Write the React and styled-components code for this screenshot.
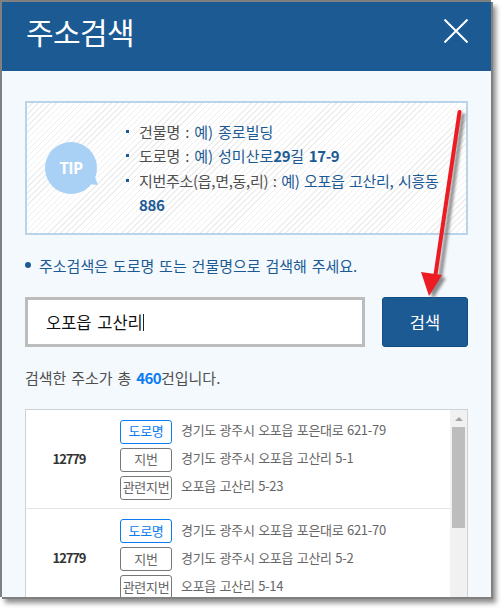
import React from "react";
import styled, { createGlobalStyle } from "styled-components";

const Global = createGlobalStyle`
  html, body { margin: 0; padding: 0; background: #fff; }
  body { font-family: "Noto Sans CJK KR", "Noto Sans", sans-serif; overflow: hidden; }
`;
const Page = styled.div`
  position: relative;
  width: 502px;
  height: 608px;
  overflow: hidden;
`;
const Win = styled.div`
  width: 489px;
  height: 595px;
  border-top: 2px solid #808080;
  border-left: 2px solid #808080;
  background: #f4f9fe;
  overflow: hidden;
  box-shadow: 2px 2px 0 #808080, 5px 6px 5px rgba(0,0,0,.45);
`;
const Header = styled.header`
  box-sizing: border-box;
  height: 69px;
  background: #1c5a94;
  display: flex;
  align-items: center;
  justify-content: space-between;
  padding: 0 23px 12px 24px;
`;
const Title = styled.h1`
  margin: 0;
  color: #fff;
  font-size: 30px;
  font-weight: 400;
  letter-spacing: -0.6px;
  line-height: 40px;
`;
const CloseIcon = styled.svg`
  width: 24px;
  height: 24px;
  display: block;
`;
const Body = styled.main`
  padding: 30px 23px 0;
`;
const Tip = styled.section`
  box-sizing: border-box;
  height: 134px;
  border: 2px solid #b8d3ea;
  background: repeating-linear-gradient(135deg, #fff 0 3.3px, #eeeeee 3.3px 4.3px);
  display: flex;
  align-items: center;
  padding: 0 20px 0 18px;
`;
const Bubble = styled.div`
  position: relative;
  flex: none;
  width: 52px;
  height: 52px;
  border-radius: 50%;
  background: #a9d1f5;
  color: #fff;
  font-family: "Open Sans", sans-serif;
  font-weight: 700;
  font-size: 16px;
  letter-spacing: -0.6px;
  display: flex;
  align-items: center;
  justify-content: center;
  margin-right: 29px;
  &::after {
    content: "";
    position: absolute;
    left: 43px;
    top: 35px;
    width: 10px;
    height: 8px;
    background: #a9d1f5;
    clip-path: polygon(70% 0, 100% 100%, 0 88%);
  }
`;
const TipList = styled.ul`
  list-style: none;
  margin: 1px 0 0;
  padding: 0;
  flex: 1;
  min-width: 0;
`;
const TipItem = styled.li`
  position: relative;
  padding-left: 13px;
  font-size: 15px;
  line-height: 24.4px;
  word-spacing: 1.5px;
  letter-spacing: ${p => (p.$tight ? "-0.3px" : "0")};
  color: #4f4f4f;
  &::before {
    content: "";
    position: absolute;
    left: 0;
    top: 10px;
    width: 3px;
    height: 3px;
    background: #1c5a94;
  }
`;
const Blue = styled.span`
  color: #1c5a94;
`;
const BoldBlue = styled.b`
  color: #1c5a94;
  font-weight: 700;
  letter-spacing: -0.4px;
`;
const Note = styled.p`
  margin: 18px 0 0;
  height: 24px;
  display: flex;
  align-items: center;
  gap: 8px;
  color: #1c5a94;
  font-size: 15px;
  word-spacing: 1.5px;
  &::before {
    content: "";
    width: 6px;
    height: 6px;
    border-radius: 50%;
    background: #1c5a94;
  }
`;
const SearchRow = styled.form`
  margin-top: 20px;
  display: flex;
  justify-content: space-between;
`;
const SearchInput = styled.div`
  box-sizing: border-box;
  width: 340px;
  height: 50px;
  border: 3px solid #bcbcbc;
  background: #fff;
  display: flex;
  align-items: center;
  padding-left: 18px;
  font-size: 16.5px;
  color: #111;
  word-spacing: 2px;
  &::after {
    content: "";
    width: 1px;
    height: 17px;
    background: #222;
  }
`;
const SearchButton = styled.button`
  box-sizing: border-box;
  width: 86px;
  height: 50px;
  border: 1px solid #0f4c86;
  border-radius: 3px;
  background: #1c5a94;
  color: #fff;
  font: 400 16.5px "Noto Sans CJK KR", sans-serif;
  padding: 0;
`;
const Count = styled.p`
  margin: 19px 0 0;
  font-size: 15px;
  line-height: 24px;
  word-spacing: 1.5px;
  color: #4f4f4f;
`;
const Strong = styled.b`
  color: #0a7bf0;
  font-weight: 700;
  letter-spacing: -0.6px;
`;
const ListBox = styled.section`
  box-sizing: border-box;
  margin-top: 19px;
  width: 443px;
  height: 200px;
  border: 1px solid #cfd2d4;
  border-width: 1px 1px 0 1px;
  background: #fff;
  display: flex;
`;
const Rows = styled.div`
  flex: 1;
  min-width: 0;
`;
const Row = styled.article`
  box-sizing: border-box;
  height: 99px;
  border-bottom: 1px solid #e3e3e3;
  display: flex;
  align-items: center;
  &:last-child { border-bottom: 0; }
`;
const Zip = styled.div`
  width: 94px;
  flex: none;
  padding: 0 8px 2px 0;
  box-sizing: border-box;
  text-align: center;
  font-size: 13px;
  font-weight: 700;
  color: #333;
  letter-spacing: -1.1px;
`;
const Addrs = styled.div`
  display: grid;
  row-gap: 4px;
  margin-top: 1px;
`;
const AddrRow = styled.div`
  display: flex;
  align-items: center;
  gap: 9px;
`;
const Tag = styled.span`
  box-sizing: border-box;
  width: 52px;
  height: 24px;
  border: 1px solid ${p => (p.$road ? "#0a7bf0" : "#777")};
  border-radius: 3px;
  color: ${p => (p.$road ? "#0a7bf0" : "#666")};
  font-size: 13px;
  letter-spacing: -0.3px;
  padding-bottom: 2px;
  display: flex;
  align-items: center;
  justify-content: center;
  white-space: nowrap;
`;
const Addr = styled.span`
  font-size: 13px;
  color: #666;
  letter-spacing: -0.3px;
  word-spacing: 1px;
  padding-bottom: 4px;
  white-space: nowrap;
`;
const Scrollbar = styled.div`
  flex: none;
  width: 17px;
  background: #f1f1f1;
  display: flex;
  flex-direction: column;
  align-items: center;
`;
const ScrollArrow = styled.div`
  margin-top: 7px;
  width: 0;
  height: 0;
  border-left: 4px solid transparent;
  border-right: 4px solid transparent;
  border-bottom: 4px solid #a3a3a3;
`;
const ScrollThumb = styled.div`
  margin-top: 6px;
  width: 13px;
  height: 101px;
  background: #bdbdbd;
`;
const Annotation = styled.svg`
  position: absolute;
  left: 0;
  top: 0;
  pointer-events: none;
`;

const rows = [
  { road: "경기도 광주시 오포읍 포은대로 621-79", lot: "경기도 광주시 오포읍 고산리 5-1", rel: "오포읍 고산리 5-23" },
  { road: "경기도 광주시 오포읍 포은대로 621-70", lot: "경기도 광주시 오포읍 고산리 5-2", rel: "오포읍 고산리 5-14" },
];

export default function App() {
  return (
    <Page>
      <Global />
      <Win>
        <Header>
          <Title>주소검색</Title>
          <CloseIcon viewBox="0 0 24 24">
            <path d="M0.5 0.5 L23.5 23.5 M23.5 0.5 L0.5 23.5" stroke="#fff" strokeWidth="2" fill="none" />
          </CloseIcon>
        </Header>
        <Body>
          <Tip>
            <Bubble>TIP</Bubble>
            <TipList>
              <TipItem>건물명 : <Blue>예) 종로빌딩</Blue></TipItem>
              <TipItem>도로명 : <Blue>예) 성미산로<BoldBlue>29</BoldBlue>길 <BoldBlue>17-9</BoldBlue></Blue></TipItem>
              <TipItem $tight>지번주소(읍,면,동,리) : <Blue>예) 오포읍 고산리, 시흥동 <BoldBlue>886</BoldBlue></Blue></TipItem>
            </TipList>
          </Tip>
          <Note>주소검색은 도로명 또는 건물명으로 검색해 주세요.</Note>
          <SearchRow>
            <SearchInput>오포읍 고산리</SearchInput>
            <SearchButton type="button">검색</SearchButton>
          </SearchRow>
          <Count>검색한 주소가 총 <Strong>460</Strong>건입니다.</Count>
          <ListBox>
            <Rows>
              {rows.map((r, i) => (
                <Row key={i}>
                  <Zip>12779</Zip>
                  <Addrs>
                    <AddrRow><Tag $road>도로명</Tag><Addr>{r.road}</Addr></AddrRow>
                    <AddrRow><Tag>지번</Tag><Addr>{r.lot}</Addr></AddrRow>
                    <AddrRow><Tag>관련지번</Tag><Addr>{r.rel}</Addr></AddrRow>
                  </Addrs>
                </Row>
              ))}
            </Rows>
            <Scrollbar>
              <ScrollArrow />
              <ScrollThumb />
            </Scrollbar>
          </ListBox>
        </Body>
      </Win>
      <Annotation width="502" height="608" viewBox="0 0 502 608">
        <defs>
          <filter id="arrowShadow" x="-50%" y="-10%" width="200%" height="120%">
            <feGaussianBlur stdDeviation="1.5" />
          </filter>
        </defs>
        <g transform="translate(4 3)" filter="url(#arrowShadow)" fill="#666" opacity=".75">
          <path d="M459 112 L436 276" stroke="#666" strokeWidth="4" strokeLinecap="round" fill="none" />
          <path d="M421 272 L442 275 L429 296 Z" />
        </g>
        <path d="M459.5 112 L435 278" stroke="#ed1c24" strokeWidth="4" strokeLinecap="round" fill="none" />
        <path d="M421 272 L442 275 L429 296 Z" fill="#ed1c24" />
      </Annotation>
    </Page>
  );
}
